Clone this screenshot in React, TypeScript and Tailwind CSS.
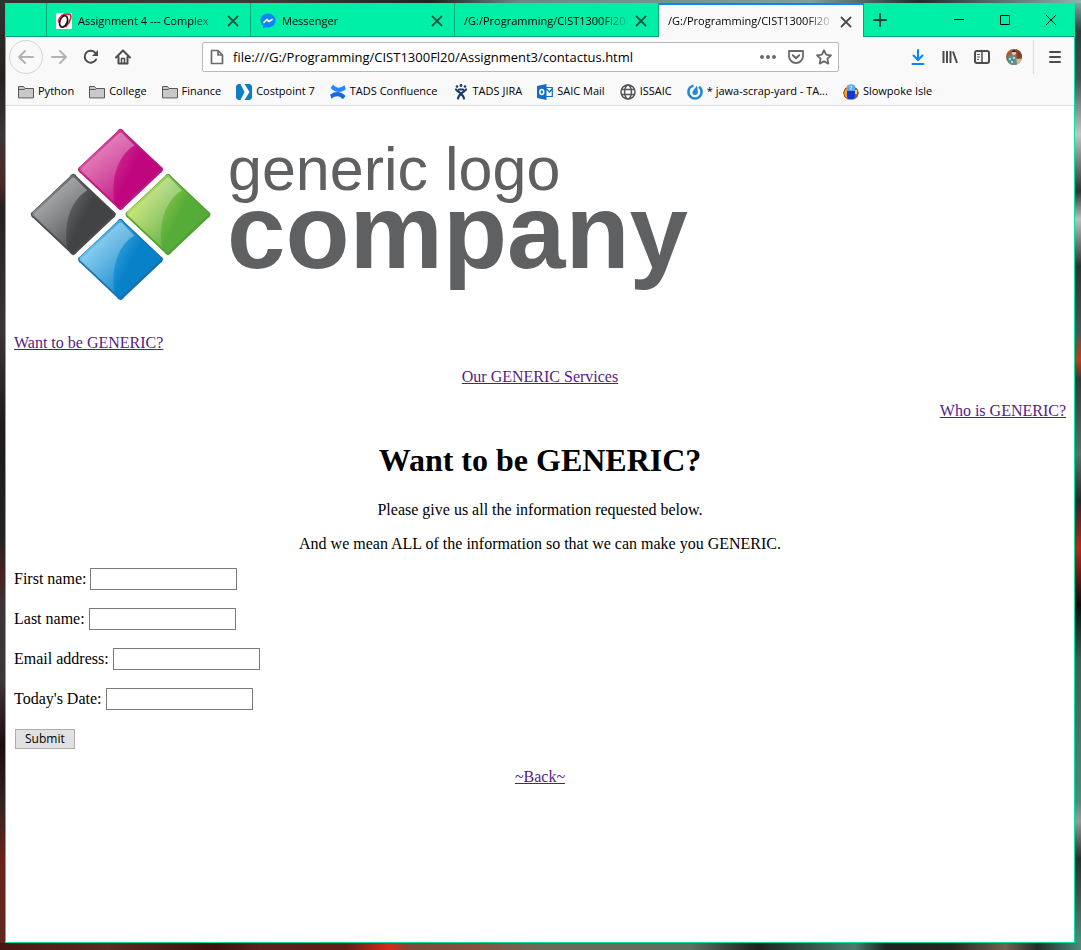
import type { ReactNode } from "react";

const diamond =
  "M-4,-37.5 Q0,-44 4,-37.5 L39.5,-4 Q45.5,0 39.5,4 L4,37.5 Q0,44 -4,37.5 L-39.5,4 Q-45.5,0 -39.5,-4Z";
const gloss =
  "M14,-24 C-2,-15 -10,8 -6,33 L-37,3 Q-41,0 -37,-3 L-3,-35 Q0,-39 3,-35Z";

function Diamond({ id, x, y, from, to, edge }: { id: string; x: number; y: number; from: string; to: string; edge: string }) {
  return (
    <g transform={`translate(${x} ${y})`}>
      <defs>
        <linearGradient id={id} x1="0" y1="0.2" x2="1" y2="0.7">
          <stop offset="0.1" stopColor={from} />
          <stop offset="0.65" stopColor={to} />
        </linearGradient>
      </defs>
      <path d={diamond} fill={edge} />
      <path d={diamond} fill={`url(#${id})`} transform="translate(-0.6 -0.8) scale(0.955)" />
      <path d={gloss} fill="url(#gloss)" />
    </g>
  );
}

function Logo() {
  return (
    <svg width="680" height="204" viewBox="0 0 680 204" className="block max-w-full" role="img" aria-label="generic logo company">
      <defs>
        <linearGradient id="gloss" x1="0.6" y1="0" x2="0.5" y2="1">
          <stop offset="0" stopColor="#fff" stopOpacity="0.36" />
          <stop offset="1" stopColor="#fff" stopOpacity="0.1" />
        </linearGradient>
      </defs>
      <Diamond id="pink" x={106.5} y={55.5} from="#d9569f" to="#c0067f" edge="#b8197c" />
      <Diamond id="gray" x={59.3} y={100.5} from="#8b8d90" to="#424345" edge="#4a4b4d" />
      <Diamond id="green" x={154} y={100.5} from="#c2df5a" to="#55ac38" edge="#4f9f33" />
      <Diamond id="blue" x={106.5} y={145.5} from="#6cc3ee" to="#0782c9" edge="#1a6fae" />
      <g fill="#5f6062" fontFamily="'Liberation Sans', Arial, sans-serif">
        <text x="214" y="76" fontSize="61">generic logo</text>
        <text x="213" y="154" fontSize="105" fontWeight="700">company</text>
      </g>
    </svg>
  );
}

function Icon({ children, className = "text-[#4c4c4f]" }: { children: ReactNode; className?: string }) {
  return (
    <svg width="16" height="16" viewBox="0 0 16 16" fill="none" stroke="currentColor" strokeWidth="2" strokeLinecap="round" strokeLinejoin="round" className={`shrink-0 ${className}`} aria-hidden="true">
      {children}
    </svg>
  );
}

const omaha = (
  <Icon>
    <rect width="16" height="16" fill="#fff" stroke="none" />
    <path d="M6 2.500Q8 1 11 1.200h3Q15.500 2.500 14.500 6T10 13.500" stroke="#e0203a" strokeWidth="1.700" />
    <ellipse cx="7.600" cy="8.400" rx="3.700" ry="6" transform="rotate(20 7.600 8.400)" stroke="#111" strokeWidth="1.700" />
    <path d="M6 2.500Q2.500 5 2.200 9" stroke="#e0203a" strokeWidth="1.300" />
  </Icon>
);

const messenger = (
  <Icon>
    <path d="M8 .5C3.600.5.5 3.600.5 7.600c0 2.200 1 4 2.500 5.200v2.700l2.500-1.300c.8.2 1.600.3 2.500.3 4.400 0 7.500-3 7.500-6.900S12.400.5 8 .5z" fill="#0a84ff" stroke="none" />
    <path d="M4 9.300l2.800-2.800 2.200 2 3-2" stroke="#fff" strokeWidth="1.700" />
  </Icon>
);

const folder = (
  <Icon>
    <path d="M.5 13.500v-11h5l1.500 2h8.500v9z" fill="#c9c9cb" stroke="#57575a" strokeWidth="1" />
    <path d="M.5 5.500h6l1-1" stroke="#57575a" strokeWidth="1" />
  </Icon>
);

const costpoint = (
  <Icon>
    <path d="M0 2l2-2h12l2 2v12l-2 2H2l-2-2z" fill="#0d7fc0" stroke="none" />
    <path d="M4.500 0h4l5 8-5 8h-4l4-8z" fill="#fff" stroke="none" />
  </Icon>
);

const confluence = (
  <Icon>
    <path d="M.5 4L3 .8C6.500 4 9.500 5 14.500 1.200l1.300 4.300C10 9.500 5 8.500.5 4z" fill="#2a84ff" stroke="none" />
    <path d="M15.500 12L13 15.200C9.500 12 6.500 11 1.500 14.800L.2 10.500C6 6.500 11 7.500 15.500 12z" fill="#1768e5" stroke="none" />
  </Icon>
);

const jira = (
  <Icon>
    <g fill="#1d3b63" stroke="none">
      <circle cx="4" cy="2.500" r="1.300" />
      <circle cx="8" cy="1.500" r="1.400" />
      <circle cx="12" cy="2.500" r="1.300" />
    </g>
    <path d="M3 5.500c1.500 2.500 7 3.500 8 9M13 5.500c-1.500 2.500-7 3.500-8 9M6 5.500h4" stroke="#1d3b63" strokeWidth="2.200" />
  </Icon>
);

const outlook = (
  <Icon>
    <path d="M9 3.500h6.300v9H9M9.500 5l3 3 3-3.500" stroke="#0f6fc6" strokeWidth="1.200" />
    <path d="M0 2l9.500-2v16L0 14z" fill="#0f6fc6" stroke="none" />
    <ellipse cx="4.800" cy="8" rx="1.900" ry="2.500" stroke="#fff" strokeWidth="1.500" />
  </Icon>
);

const globe = (
  <Icon>
    <g stroke="#55565a" strokeWidth="1.500">
      <circle cx="8" cy="8" r="7" />
      <ellipse cx="8" cy="8" rx="3.400" ry="7" />
      <path d="M1.800 5.500h12.400M1.800 10.500h12.400" />
    </g>
  </Icon>
);

const mattermost = (
  <Icon>
    <path d="M6.500 1.700C3.500 2.200 1.400 4.800 1.400 8c0 3.600 3 6.500 6.600 6.500s6.600-2.900 6.600-6.500c0-2.300-1-4-2.600-5.200" stroke="#2389d7" strokeWidth="2.600" strokeLinecap="butt" />
    <path d="M10 1.500L5.800 7.200C4.800 9 6 11 8 11s3.200-1.500 2.900-3.300z" fill="#2389d7" stroke="none" />
  </Icon>
);

const slowpoke = (
  <Icon>
    <path d="M5 3L2 5 .6 9 2 13l3 2z" fill="#f5a623" stroke="#b0342a" strokeWidth="1" />
    <path d="M11 3l3 2 1.400 4-1.400 4-3 2z" fill="#e33b2e" stroke="#477a3a" strokeWidth="1" />
    <path d="M12 6h2v4h-2z" fill="#f8d84a" stroke="none" />
    <path d="M4 1.500L8 0l4 1.500V7H4z" fill="#58a8ff" stroke="none" />
    <path d="M4 7h8v6l-2 2.500H6L4 13z" fill="#0a38e0" stroke="none" />
    <path d="M6.800 2.700c1-1.500 3 0 1.200 1.600v.8" stroke="#fff" strokeWidth="1" />
  </Icon>
);

function CloseIcon() {
  return (
    <svg width="16" height="16" viewBox="0 0 16 16" stroke="currentColor" strokeWidth="1.8" strokeLinecap="round" aria-hidden="true">
      <path d="M3.500 3.500l9 9M12.500 3.500l-9 9" />
    </svg>
  );
}

function Tab({ title, icon, active }: { title: string; icon?: ReactNode; active?: boolean }) {
  return (
    <div
      className={
        active
          ? "flex w-51 items-center border-t-2 border-[#0a84ff] bg-[#f9f9fa] px-[9px] pt-px text-[#4c4c4f]"
          : "flex w-51 items-center border-r border-b border-r-[#00a876] border-b-[#00a876] px-[9px] pt-[3px] text-[#155844]"
      }
    >
      <button type="button" className="flex min-w-0 flex-1 items-center gap-1.5 text-[11px] whitespace-nowrap text-black [mask-image:linear-gradient(to_right,black_calc(100%-28px),transparent)]">
        {icon}
        {title}
      </button>
      <button type="button" aria-label="Close tab" className="ml-1">
        <CloseIcon />
      </button>
    </div>
  );
}

const bookmarks: { label: string; icon: ReactNode }[] = [
  { label: "Python", icon: folder },
  { label: "College", icon: folder },
  { label: "Finance", icon: folder },
  { label: "Costpoint 7", icon: costpoint },
  { label: "TADS Confluence", icon: confluence },
  { label: "TADS JIRA", icon: jira },
  { label: "SAIC Mail", icon: outlook },
  { label: "ISSAIC", icon: globe },
  { label: "* jawa-scrap-yard - TA...", icon: mattermost },
  { label: "Slowpoke Isle", icon: slowpoke },
];

function ToolButton({ label, children }: { label: string; children: ReactNode }) {
  return (
    <button type="button" aria-label={label} className="flex h-8 w-8 shrink-0 items-center justify-center">
      {children}
    </button>
  );
}

function TitleBar() {
  return (
    <div className="flex h-[34px] bg-[#00efa7]">
      <div className="w-[41px] border-r border-b border-[#00a876]" />
      <Tab title="Assignment 4 --- Complex" icon={omaha} />
      <Tab title="Messenger" icon={messenger} />
      <Tab title="/G:/Programming/CIST1300Fl20" />
      <Tab title="/G:/Programming/CIST1300Fl20" active />
      <div className="flex flex-1 items-center justify-between border-b border-l border-[#00a876]">
        <button type="button" aria-label="New tab" className="flex h-8 w-8 items-center justify-center">
          <Icon className="text-[#0b4535]"><path d="M8 2v12M2 8h12" /></Icon>
        </button>
        <div className="flex text-black">
          {[
            ["Minimize", "M3 7.5h10"],
            ["Maximize", "M3.5 3.5h9v9h-9z"],
            ["Close", "M3 3l10 10M13 3L3 13"],
          ].map(([label, d]) => (
            <button key={label} type="button" aria-label={label} className="flex h-8 w-[46px] items-center justify-center">
              <svg width="16" height="16" viewBox="0 0 16 16" fill="none" stroke="currentColor" aria-hidden="true"><path d={d} /></svg>
            </button>
          ))}
        </div>
      </div>
    </div>
  );
}

function NavBar() {
  return (
    <div className="flex h-10 items-center px-[3px]">
      <button type="button" aria-label="Back" className="flex h-[34px] w-[34px] shrink-0 items-center justify-center rounded-full border border-[#d4d4d6]">
        <Icon className="text-[#b3b3b5]"><path d="M15 8H1.500M7 2L1 8l6 6" /></Icon>
      </button>
      <ToolButton label="Forward">
        <Icon className="text-[#b3b3b5]"><path d="M1 8h13.500M9 2l6 6-6 6" /></Icon>
      </ToolButton>
      <ToolButton label="Reload">
        <Icon>
          <path d="M13 10.500A6 6 0 1 1 12.500 4" />
          <path d="M15 1v6H9z" fill="currentColor" stroke="none" />
        </Icon>
      </ToolButton>
      <ToolButton label="Home">
        <Icon>
          <path d="M1 8.500L8 1.500l7 7M3.500 8v6.500h9V8" />
          <path d="M6.500 14v-4.500h3V14" strokeWidth="1.500" />
        </Icon>
      </ToolButton>
      <div className="mx-[63px] flex h-[30px] min-w-0 flex-1 items-center gap-3 rounded-xs border border-[#b8b8ba] bg-white px-1.5">
        <label className="flex min-w-0 flex-1 items-center gap-2">
          <Icon className="text-[#6a6a6d]"><path d="M2.500 1.500H9L13.500 6v8.500h-11zM9 1.500V6h4.500" strokeWidth="1.700" /></Icon>
          <input
            type="text"
            aria-label="Address"
            defaultValue="file:///G:/Programming/CIST1300Fl20/Assignment3/contactus.html"
            className="min-w-0 flex-1 pt-0.5 text-[13px] text-black outline-none"
          />
        </label>
        <button type="button" aria-label="Page actions">
          <Icon className="text-[#6a6a6d]"><g fill="currentColor" stroke="none"><circle cx="2" cy="8" r="2" /><circle cx="8" cy="8" r="2" /><circle cx="14" cy="8" r="2" /></g></Icon>
        </button>
        <button type="button" aria-label="Save to Pocket">
          <Icon className="text-[#6a6a6d]"><path d="M1 2h14v5c0 4-3 7-7 7s-7-3-7-7z" strokeWidth="1.800" /><path d="M4.800 6.200L8 9.300l3.200-3.100" /></Icon>
        </button>
        <button type="button" aria-label="Bookmark">
          <Icon className="text-[#6a6a6d]"><path d="M8 1.200l2.100 4.500 4.900.6-3.600 3.400.9 4.900L8 12.200l-4.300 2.400.9-4.900L1 6.300l4.900-.6z" strokeWidth="1.800" /></Icon>
        </button>
      </div>
      <ToolButton label="Downloads">
        <Icon className="text-[#0a84ff]"><path d="M8 1v9.500M3.500 6.500L8 11l4.500-4.500M2.500 15h11" /></Icon>
      </ToolButton>
      <ToolButton label="Library">
        <Icon><path d="M1.500 2v12M5 2v12M8.500 2v12M11 2.500L15 14" strokeLinecap="butt" /></Icon>
      </ToolButton>
      <ToolButton label="Sidebars">
        <Icon><rect x="1" y="2" width="14" height="12" rx="2" /><path d="M8 2v12" strokeWidth="1.500" /><path d="M3.500 5.500h2M3.500 8h2M3.500 10.500h1" strokeWidth="1" /></Icon>
      </ToolButton>
      <ToolButton label="Account">
        <Icon>
          <clipPath id="avatar"><circle cx="8" cy="8" r="8" /></clipPath>
          <g clipPath="url(#avatar)" stroke="none">
            <rect width="16" height="16" fill="#a0603e" />
            <path d="M10 0h6v9h-5z" fill="#7d4429" />
            <path d="M9 10h7v6H8z" fill="#d9b79b" />
            <path d="M2 8l4-3 4 1 1 10H2z" fill="#5b8f8c" />
            <path d="M3 9h2v2H3zM7 8h2v2H7zM5 12h2v2H5z" fill="#b9d6cd" />
            <circle cx="8" cy="3.800" r="2.200" fill="#e8c4ac" />
            <path d="M5.500 3Q8-.8 10.500 3z" fill="#2a211e" />
          </g>
        </Icon>
      </ToolButton>
      <div className="mr-[5px] ml-[3px] h-[34px] w-px bg-[#dcdcde]" />
      <ToolButton label="Menu">
        <Icon><path d="M3 3h10M3 8h10M3 13h10" /></Icon>
      </ToolButton>
    </div>
  );
}

function Field({ id, label }: { id: string; label: string }) {
  return (
    <div className="flex items-center gap-1">
      <label htmlFor={id}>{label}</label>
      <input id={id} type="text" className="h-[22px] w-[147px] border border-[#7a7a7a] bg-white px-0.5" />
    </div>
  );
}

const link = "text-[#551a8b] underline";

export default function App() {
  return (
    <div className="grid min-h-screen grid-cols-[5px_minmax(0,1fr)_6px] grid-rows-[3px_minmax(0,1fr)_7px] bg-[#2e211f]">
      <div className="col-span-3 bg-[linear-gradient(to_right,#33312f,#3d3a38_25%,#222_40%,#688a84_48%,#7aa29b_75%,#222b2a_85%,#8fb3ad)]" />
      <div className="bg-[linear-gradient(to_bottom,#33312f,#24211f_8%,#3a3638_14%,#4c2a26_19%,#262021_22%,#3b3537_35%,#1d1a19_45%,#242324_57%,#4a2220_61%,#3a3436_64%,#3c3638_72%,#1b0d0e_79%,#2f2420_85%,#6c211a_91%,#5b2a20)]" />
      <div className="flex flex-col border border-[#0fe0a2] bg-white">
        <header className="-mt-px bg-[#f9f9fa] font-['Open_Sans','Noto_Sans',sans-serif]">
          <TitleBar />
          <NavBar />
          <nav className="flex h-[29px] items-center gap-[15px] overflow-hidden border-b border-[#dcdcde] pt-px pl-3">
            {bookmarks.map(({ label, icon }) => (
              <a key={label} href="#" className="flex shrink-0 items-center gap-1 text-[11px] text-black">
                {icon}
                {label}
              </a>
            ))}
          </nav>
        </header>
        <main className="flex flex-col gap-4 p-2 font-['Liberation_Serif','Times_New_Roman',serif] text-base leading-[18px] text-black">
          <Logo />
          <p><a href="#" className={link}>Want to be GENERIC?</a></p>
          <p className="text-center"><a href="#" className={link}>Our GENERIC Services</a></p>
          <p className="text-right"><a href="#" className={link}>Who is GENERIC?</a></p>
          <h1 className="mt-1.5 mb-[7px] text-center text-[32px] leading-9 font-bold">Want to be GENERIC?</h1>
          <p className="text-center">Please give us all the information requested below.</p>
          <p className="text-center">And we mean ALL of the information so that we can make you GENERIC.</p>
          <form className="-mt-px flex flex-col items-start gap-[18px] pb-[3px]">
            <Field id="first" label="First name:" />
            <Field id="last" label="Last name:" />
            <Field id="email" label="Email address:" />
            <Field id="date" label="Today's Date:" />
            <button type="button" className="mt-px ml-px h-5 border border-[#adadad] bg-[#e1e1e1] px-[9px] font-['Open_Sans','Noto_Sans',sans-serif] text-xs leading-[18px]">
              Submit
            </button>
          </form>
          <p className="text-center"><a href="#" className={link}>~Back~</a></p>
        </main>
      </div>
      <div className="bg-[linear-gradient(to_bottom,#7fa39e,#2a3d3d_3%,#3c5453_8%,#b9c8c5_14%,#293433_20%,#b5c3c0_23%,#2a3332_28%,#3c5b56_35%,#b8401d_38%,#2c3c39_40%,#4d736b_48%,#222b29_53%,#b02b1c_58%,#0d0c0c_64%,#356256_70%,#4f8a7d_85%,#8c9f99_87%,#262f2b_91%,#4f8a7d)]" />
      <div className="col-span-3 bg-[linear-gradient(to_right,#4a1613,#5b2a20_10%,#3d0f0d_20%,#5a221b_24%,#5e1f18_32%,#d62b18_36%,#7a4a3a_38%,#85523f_44%,#6b6a58_50%,#5d6f60_64%,#1c211e_70%,#4e7a6d_79%,#1d2421_82%,#27251f_88%,#6f6252_93%,#252c28_96%,#4f8a7d)]" />
    </div>
  );
}
